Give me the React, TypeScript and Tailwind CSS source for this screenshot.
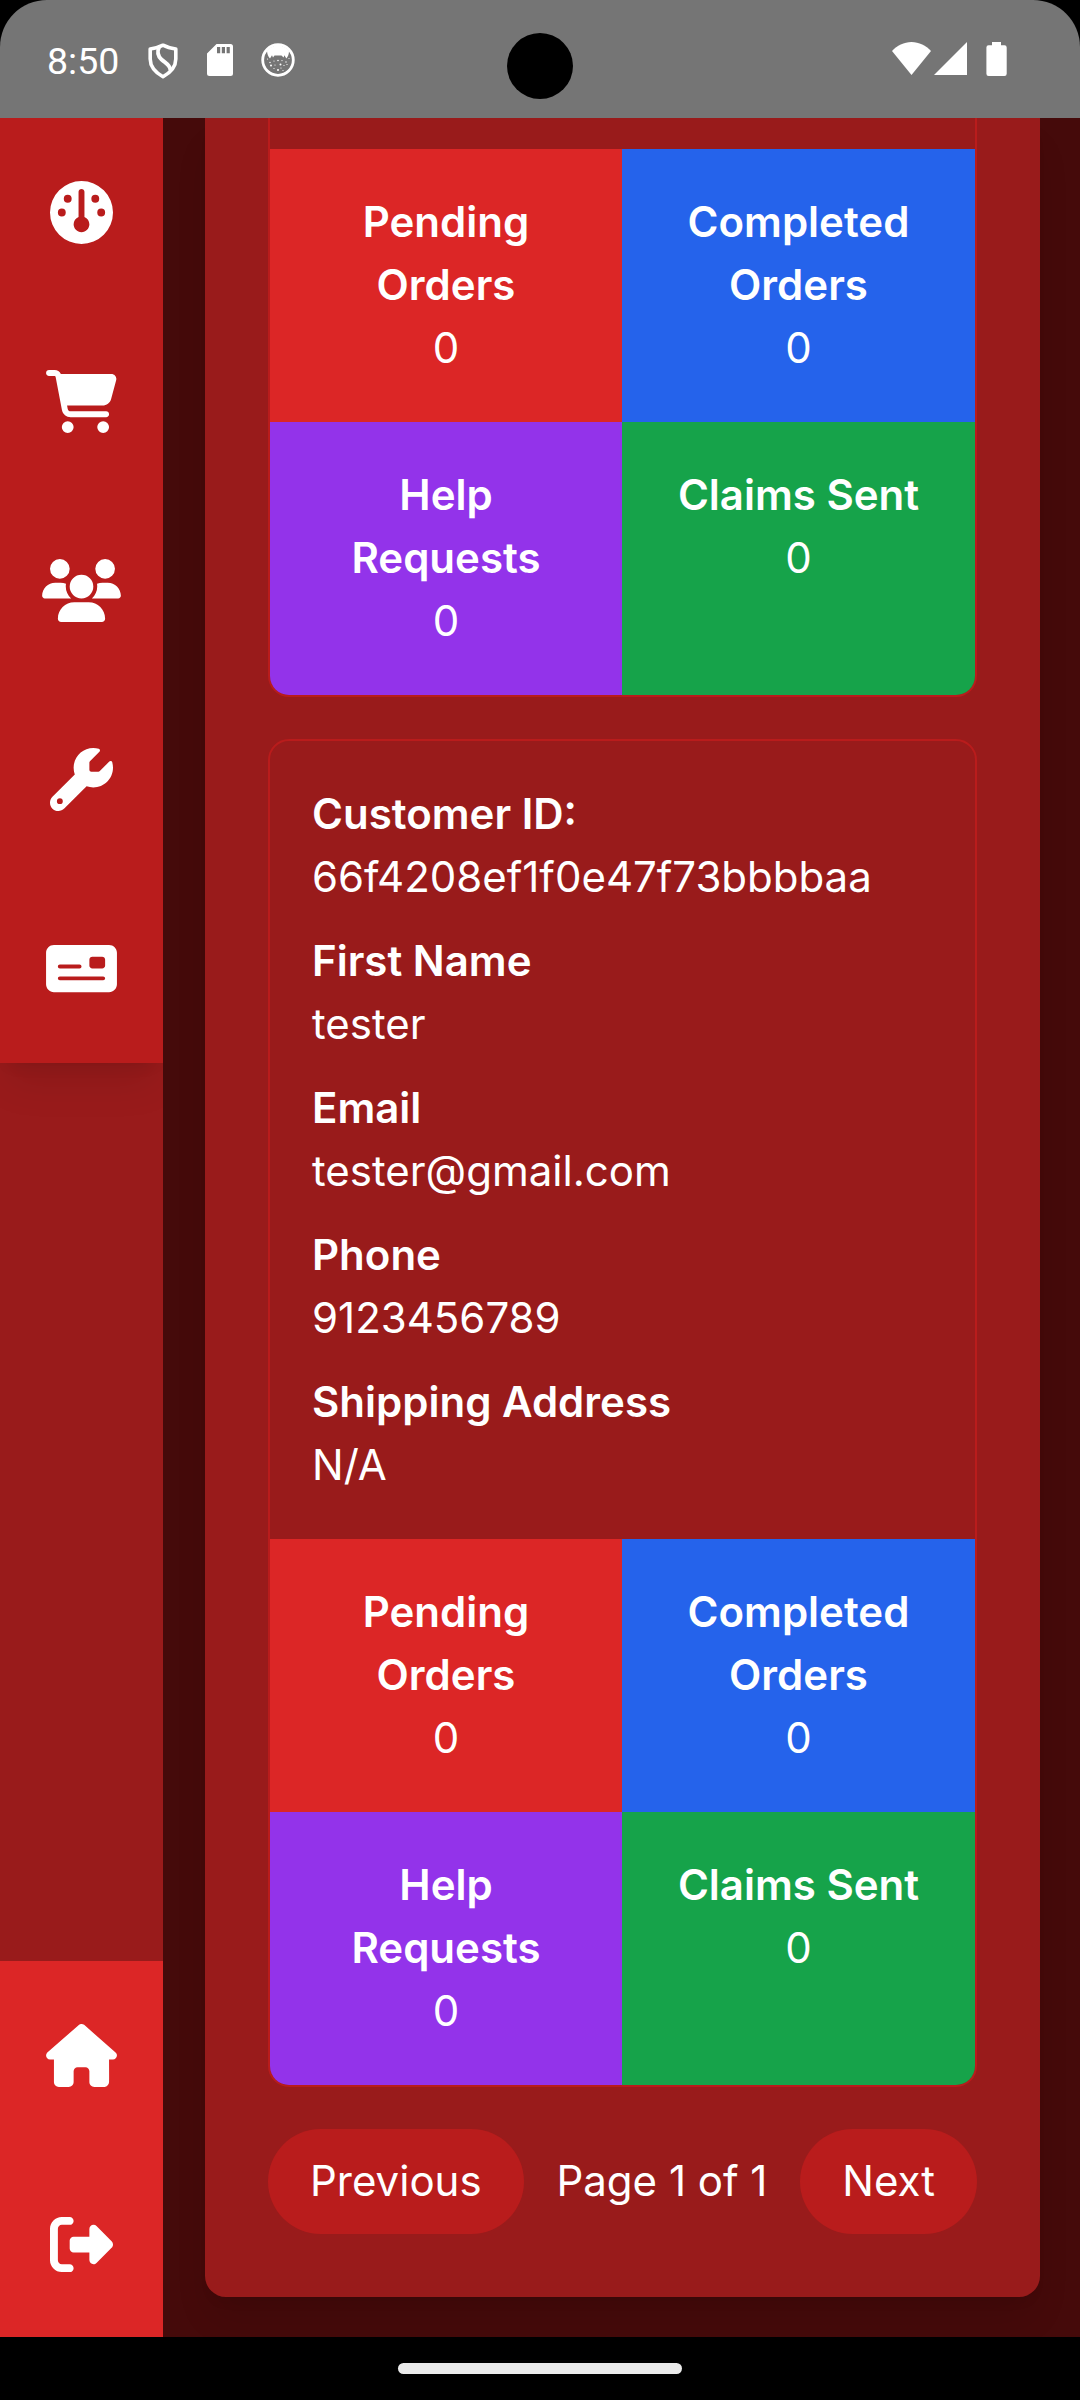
import React from "react";
import type { IconType } from "react-icons";
import {
  FaCartShopping,
  FaGauge,
  FaHouse,
  FaMoneyCheck,
  FaRightFromBracket,
  FaUsers,
  FaWrench,
} from "react-icons/fa6";

type NavEntry = { label: string; icon: IconType; size: string };

const topNav: NavEntry[] = [
  { label: "Dashboard", icon: FaGauge, size: "h-[63px] w-[63px]" },
  { label: "Orders", icon: FaCartShopping, size: "h-[63px] w-[71px]" },
  { label: "Customers", icon: FaUsers, size: "h-[63px] w-[79px]" },
  { label: "Repairs", icon: FaWrench, size: "h-[63px] w-[63px]" },
  { label: "Claims", icon: FaMoneyCheck, size: "h-[63px] w-[71px]" },
];

const bottomNav: NavEntry[] = [
  { label: "Home", icon: FaHouse, size: "h-[63px] w-[71px]" },
  { label: "Log out", icon: FaRightFromBracket, size: "h-[63px] w-[63px]" },
];

const stats = [
  { label: "Pending Orders", value: 0, color: "bg-[#dc2626]" },
  { label: "Completed Orders", value: 0, color: "bg-[#2563eb]" },
  { label: "Help Requests", value: 0, color: "bg-[#9333ea]" },
  { label: "Claims Sent", value: 0, color: "bg-[#16a34a]" },
];

const fields = [
  { label: "Customer ID:", value: "66f4208ef1f0e47f73bbbbaa" },
  { label: "First Name", value: "tester" },
  { label: "Email", value: "tester@gmail.com" },
  { label: "Phone", value: "9123456789" },
  { label: "Shipping Address", value: "N/A" },
];

function ShieldIcon() {
  return (
    <svg viewBox="0 0 30 36" className="h-9 w-[30px]" fill="none" stroke="white" strokeWidth="3.6" strokeLinejoin="round">
      <path d="M15 2.2 C11 4.4 6.5 5.4 2.2 6 V16 C2.2 23.500 7.500 29.500 15 33.800 C22.500 29.500 27.800 23.500 27.800 16 V6 C23.500 5.400 19 4.400 15 2.200 Z" />
      <path d="M11.200 4 C8.800 9 9.800 13 13.500 16.500 C17.500 20.200 22 21.500 22.300 27" strokeWidth="3.8" />
    </svg>
  );
}

function SdCardIcon() {
  return (
    <svg viewBox="0 0 26 32" className="h-8 w-[26px]">
      <path
        fill="white"
        fillRule="evenodd"
        d="M9.500 0 H23.500 A2.500 2.500 0 0 1 26 2.500 V29.500 A2.500 2.500 0 0 1 23.500 32 H2.500 A2.500 2.500 0 0 1 0 29.500 V9.500 Z M10 3 V9.300 H13.200 V3 Z M14.800 3 V9.300 H18 V3 Z M19.600 3 V9.300 H22.800 V3 Z"
      />
    </svg>
  );
}

function FaceIcon() {
  const dots = [
    [9, 19.5, 0.7], [13, 18, 0.6], [17, 17.5, 0.8], [21, 17.6, 0.6], [25, 19, 0.7],
    [10, 22.5, 1], [14, 22, 0.6], [19.5, 21.5, 1], [23, 22.5, 0.6], [26, 21.5, 0.6],
    [13, 25.5, 0.6], [17, 27, 1], [20, 25, 0.6], [22, 27.5, 0.6], [6.5, 16, 0.6], [28, 15.5, 0.6],
  ];
  return (
    <svg viewBox="0 0 34 34" className="h-[34px] w-[34px]">
      <circle cx="17" cy="17" r="15.300" fill="none" stroke="white" strokeWidth="2.800" />
      <path
        fill="white"
        d="M6 8 C9 4 13 2.500 17 2.500 C21 2.500 25 4 28 8 C28 11 27 13.500 25.300 15.500 L23.500 12.200 L22.500 14.500 L20.500 12.600 H13.500 L12 14.500 L11 12.200 L9 15.500 C7.200 13.500 6.200 11 6 8 Z"
      />
      {dots.map(([cx, cy, r]) => (
        <circle key={`${cx}-${cy}`} cx={cx} cy={cy} r={r} fill="white" />
      ))}
    </svg>
  );
}

function StatusBar() {
  return (
    <div className="h-[118px] shrink-0 bg-black">
      <div className="relative flex h-full items-start rounded-t-[47px] bg-[#757575] text-white">
        <span className="mt-[39px] ml-[47px] w-[71px] whitespace-nowrap font-[Roboto,sans-serif] text-[37.5px] leading-[44px]">
          8:50
        </span>
        <span className="mt-[42.5px] ml-[29.5px]">
          <ShieldIcon />
        </span>
        <span className="mt-11 ml-[29.5px]">
          <SdCardIcon />
        </span>
        <span className="mt-[43px] ml-7">
          <FaceIcon />
        </span>
        <span className="absolute top-[33px] left-[507px] h-[66px] w-[66px] rounded-full bg-black" />
        <div className="mt-[42px] mr-[73.5px] ml-auto flex items-start">
          <svg viewBox="0 0 39 33" className="h-[33px] w-[39px]" fill="white">
            <path d="M0 9 C5 3.500 12 0 19.500 0 C27 0 34 3.500 39 9 L19.500 33 Z" />
          </svg>
          <svg viewBox="0 0 33 33" className="ml-[3px] h-[33px] w-[33px]" fill="white">
            <path d="M33 0 V33 H0 Z" />
          </svg>
          <svg viewBox="0 0 21 34" className="ml-[18.5px] h-[34px] w-[21px]" fill="white">
            <path d="M6 0 H15 V3.200 H18.500 A2.200 2.200 0 0 1 20.700 5.400 V31.800 A2.200 2.200 0 0 1 18.500 34 H2.600 A2.200 2.200 0 0 1 .4 31.800 V5.400 A2.200 2.200 0 0 1 2.600 3.200 H6 Z" />
          </svg>
        </div>
      </div>
    </div>
  );
}

function NavItem({ label, icon: Icon, size }: NavEntry) {
  return (
    <a aria-label={label} className="flex h-[189px] shrink-0 items-center justify-center text-white">
      <Icon className={size} />
    </a>
  );
}

function Sidebar() {
  return (
    <nav className="flex w-[163px] shrink-0 flex-col justify-between overflow-hidden bg-[#991b1b]">
      <div className="flex flex-col bg-[#b91c1c] shadow-[0_26px_39px_-8px_rgba(0,0,0,0.1),0_10px_16px_-10px_rgba(0,0,0,0.1)]">
        {topNav.map((item) => (
          <NavItem key={item.label} {...item} />
        ))}
      </div>
      <div className="flex h-[376px] flex-col overflow-hidden bg-[#dc2626]">
        {bottomNav.map((item) => (
          <NavItem key={item.label} {...item} />
        ))}
      </div>
    </nav>
  );
}

function StatGrid() {
  return (
    <div className="grid grid-cols-[352px_353px]">
      {stats.map((s) => (
        <div key={s.label} className={`px-[42px] pt-[41px] pb-[43px] text-center ${s.color}`}>
          <p className="font-semibold">{s.label}</p>
          <p>{s.value}</p>
        </div>
      ))}
    </div>
  );
}

export default function App() {
  return (
    <div className="flex h-[2400px] w-[1080px] flex-col overflow-hidden bg-black font-[Inter,sans-serif] text-[42px] leading-[63px] text-white">
      <StatusBar />
      <div className="flex h-[2219px] shrink-0 overflow-hidden">
        <Sidebar />
        <main className="flex-1 overflow-hidden bg-[#450a0a] pr-10 pl-[42px]">
          <section className="flex flex-col gap-[42px] rounded-b-[21px] bg-[#991b1b] px-[63px] pb-[63px] shadow-[0_26px_39px_-8px_rgba(0,0,0,0.1),0_10px_16px_-10px_rgba(0,0,0,0.1)]">
            <article className="overflow-hidden rounded-b-[21px] border-x-2 border-b-2 border-[#b91c1c] pt-[31px]">
              <StatGrid />
            </article>
            <article className="overflow-hidden rounded-[21px] border-2 border-[#b91c1c]">
              <dl className="flex flex-col gap-[21px] px-[42px] pt-[41px] pb-[43px]">
                {fields.map((f) => (
                  <div key={f.label}>
                    <dt className="font-semibold">{f.label}</dt>
                    <dd>{f.value}</dd>
                  </div>
                ))}
              </dl>
              <StatGrid />
            </article>
            <div className="flex items-center justify-between">
              <button className="rounded-full bg-[#b91c1c] px-[42px] pt-5 pb-[22px]">Previous</button>
              <span className="pb-0.5">Page 1 of 1</span>
              <button className="rounded-full bg-[#b91c1c] px-[42px] pt-5 pb-[22px]">Next</button>
            </div>
          </section>
        </main>
      </div>
      <div className="flex h-[63px] shrink-0 items-center justify-center">
        <div className="h-[11px] w-[284px] rounded-full bg-[#ebebeb]" />
      </div>
    </div>
  );
}
